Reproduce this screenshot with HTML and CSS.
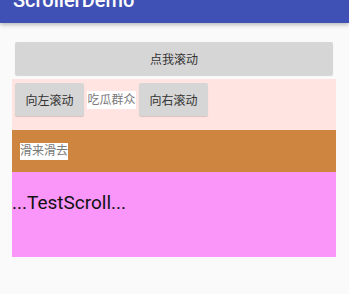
FILE: index.html
```html
<!DOCTYPE html>
<html lang="zh">
<head>
    <meta charset="UTF-8">
    <meta name="viewport" content="width=device-width, initial-scale=1.0">
    <title>ScrollerDemo</title>
    <link rel="stylesheet" href="styles.css">
</head>
<body>
    <header class="appbar">
        <div class="title">ScrollerDemo</div>
    </header>

    <main class="content">
        <button class="btn btn-wide">点我滚动</button>

        <div class="row-pink">
            <button class="btn">向左滚动</button>
            <span class="label">吃瓜群众</span>
            <button class="btn">向右滚动</button>
        </div>

        <div class="row-orange">
            <span class="label">滑来滑去</span>
        </div>

        <div class="row-magenta">...TestScroll...</div>
    </main>
</body>
</html>
```

FILE: styles.css
```css
body {
    margin: 0;
    background: #fafafa;
    font-family: Roboto, "Noto Sans CJK SC", sans-serif;
}
.appbar {
    height: 23px;
    background: #3f51b5;
    box-shadow: 0 2px 4px rgba(0, 0, 0, 0.25);
    overflow: hidden;
}
.title {
    margin-top: -10px;
    padding-left: 13px;
    color: #fff;
    font-size: 20px;
    font-weight: 500;
    line-height: 20px;
}
.content {
    margin: 0 13px 0 12px;
    padding-top: 19px;
}
.btn {
    display: block;
    height: 33px;
    padding: 0 10.5px;
    border: none;
    border-radius: 2px;
    background: #d6d6d6;
    box-shadow: 0 1px 1px rgba(0, 0, 0, 0.15);
    color: #333;
    font-family: Roboto, "Noto Sans CJK SC", sans-serif;
    font-size: 12px;
}
.btn-wide {
    width: calc(100% - 6px);
    margin: 0 3px 4px;
}
.row-pink {
    display: flex;
    align-items: center;
    gap: 3px;
    padding: 4px 3px 14px;
    background: #ffe4e1;
}
.label {
    background: #fff;
    color: #7a7a7a;
    font-size: 12px;
    line-height: 18px;
}
.row-pink .label {
    padding: 0 0.5px;
}
.row-orange {
    display: flex;
    align-items: center;
    height: 42px;
    padding-left: 8px;
    background: #cd853f;
}
.row-orange .label {
    line-height: 17px;
}
.row-magenta {
    height: 85px;
    box-sizing: border-box;
    padding-top: 21px;
    background: #fa96fa;
    color: #111;
    font-size: 19px;
    line-height: 20px;
}
```
